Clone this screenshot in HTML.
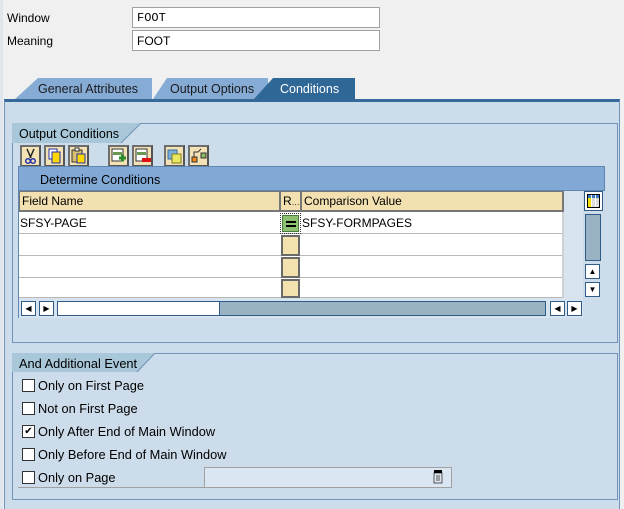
<!DOCTYPE html>
<html><head><meta charset="utf-8"><style>
*{box-sizing:border-box;margin:0;padding:0}
body{width:624px;height:509px;background:#f0f0f0;font-family:"Liberation Sans",Tahoma,sans-serif;font-size:12px;color:#000;position:relative;overflow:hidden}
.a{position:absolute}
.lbl{left:3px;width:128px;height:21px;padding:4px 0 0 4px;background:#f0f0f0}
.inp{background:#fff;border:1px solid #a0a0a0;height:21px;width:248px;left:132px;padding:3px 0 0 4px;font-family:"Liberation Mono",monospace;font-size:12px}
.btn{width:21px;height:22px;top:145px;background:#f2e2b4;border:2px solid #777;border-color:#6e6e6e #555 #555 #6e6e6e}
.hd{top:191px;height:21px;background:#f2e0b0;border:1px solid #777;border-width:1px 2px 2px 1px;padding:2px 0 0 2px}
.row{left:19px;width:543px;height:22px;background:#fff;border-bottom:1px solid #b8b8b8}
.rb{left:281px;width:19px;height:21px;background:#f3e1ae;border:2px solid #6a6a6a}
.cb{left:22px;width:13px;height:13px;background:#fff;border:1px solid #333}
.ct{left:38px;font-size:12.8px}
.sb{width:15px;height:15px;background:#fff;border:1px solid #2e5c86}
</style></head><body>
<div class="a" style="left:0;top:0;width:3px;height:509px;background:#dfe6ee"></div>
<div class="a lbl" style="top:7px">Window</div>
<div class="a inp" style="top:7px">FOOT</div>
<div class="a lbl" style="top:30px">Meaning</div>
<div class="a inp" style="top:30px;font-family:'Liberation Sans',sans-serif">FOOT</div>

<svg class="a" style="left:0;top:76px" width="624" height="26">
<polygon points="15,23 38,2 152,2 152,23" fill="#86acd6"/>
<polygon points="153,23 167,2 268,2 268,23" fill="#86acd6"/>
<polygon points="254,23 273,2 355,2 355,23" fill="#2f6797"/>
<text x="38" y="17" font-family="Liberation Sans,sans-serif" font-size="12.5" fill="#1a1a1a">General Attributes</text>
<text x="170" y="17" font-family="Liberation Sans,sans-serif" font-size="12.5" fill="#1a1a1a">Output Options</text>
<text x="280" y="17" font-family="Liberation Sans,sans-serif" font-size="12.5" fill="#fff">Conditions</text>
</svg>
<div class="a" style="left:4px;top:99px;width:616px;height:410px;background:#cddcea;border-top:3px solid #35699a;border-left:1px solid #6f93b8;border-right:1px solid #6f93b8"></div>

<div class="a" style="left:12px;top:123px;width:606px;height:220px;border:1px solid #6f93b8"></div>
<svg class="a" style="left:12px;top:123px" width="130" height="21"><polygon points="0,0 129,0 109,20 0,20" fill="#a8c8da"/><line x1="129" y1="0" x2="109" y2="20" stroke="#6f93b8"/><text x="7" y="15" font-family="Liberation Sans,sans-serif" font-size="12.5">Output Conditions</text></svg>
<div class="a btn" style="left:20px"><svg width="17" height="18"><path d="M5 2 L9 11 M12 2 L8 11" stroke="#222" stroke-width="1.5" fill="none"/><circle cx="6" cy="14" r="2.3" stroke="#2233aa" fill="none" stroke-width="1.5"/><circle cx="11" cy="14" r="2.3" stroke="#2233aa" fill="none" stroke-width="1.5"/></svg></div>
<div class="a btn" style="left:44px"><svg width="17" height="18"><rect x="3" y="2" width="8" height="10" fill="#fff" stroke="#2233aa"/><rect x="6" y="5" width="8" height="11" fill="#ffd800" stroke="#2233aa"/></svg></div>
<div class="a btn" style="left:68px"><svg width="17" height="18"><rect x="2" y="3" width="10" height="12" fill="#d8c070" stroke="#333"/><rect x="5" y="1" width="4" height="3" fill="#fff" stroke="#333"/><rect x="7" y="7" width="8" height="9" fill="#ffd800" stroke="#2233aa"/></svg></div>
<div class="a btn" style="left:108px"><svg width="17" height="18"><rect x="2" y="2" width="11" height="12" fill="#fff" stroke="#333"/><rect x="3" y="5" width="9" height="3" fill="#6a9a50"/><path d="M9 11h7M12.5 7.5v7" stroke="#2a8a2a" stroke-width="3"/></svg></div>
<div class="a btn" style="left:132px"><svg width="17" height="18"><rect x="2" y="2" width="11" height="12" fill="#fff" stroke="#333"/><rect x="3" y="5" width="9" height="3" fill="#6a9a50"/><rect x="8" y="11" width="9" height="4" fill="#dd1111"/></svg></div>
<div class="a btn" style="left:164px"><svg width="17" height="18"><rect x="2" y="3" width="9" height="9" fill="#7ab0e0" stroke="#3a6a9a"/><rect x="6" y="7" width="9" height="9" fill="#e8e860" stroke="#7a7a20"/></svg></div>
<div class="a btn" style="left:188px"><svg width="17" height="18"><rect x="2" y="10" width="5" height="5" fill="#f08a1a" stroke="#333"/><rect x="11" y="6" width="5" height="5" fill="#8ab860" stroke="#333"/><path d="M4 10V5h4l3-3" stroke="#333" fill="none"/></svg></div>

<div class="a" style="left:18px;top:166px;width:587px;height:25px;background:#82a9d6;border:1px solid #5d86b0;padding:6px 0 0 21px;font-size:12.5px">Determine Conditions</div>
<div class="a" style="left:18px;top:191px;width:565px;height:127px;background:#d7e3ee;border-left:1px solid #5d86b0"></div>
<div class="a hd" style="left:19px;width:262px">Field Name</div>
<div class="a hd" style="left:280px;width:22px">R<span style="font-size:8px">…</span></div>
<div class="a hd" style="left:301px;width:263px">Comparison Value</div>
<div class="a row" style="top:212px;padding:4px 0 0 1px">SFSY-PAGE</div>
<div class="a row" style="top:234px"></div>
<div class="a row" style="top:256px"></div>
<div class="a row" style="top:278px;height:20px"></div>
<div class="a" style="left:302px;top:216px">SFSY-FORMPAGES</div>
<div class="a" style="left:280px;top:213px;width:21px;height:21px;border:1px dotted #333;padding:1px"><div style="width:17px;height:17px;background:#8dc070;border:1px solid #4a7a3a;position:relative"><div style="position:absolute;left:3px;top:5px;width:10px;height:2px;background:#000"></div><div style="position:absolute;left:3px;top:9px;width:10px;height:2px;background:#000"></div></div></div>
<div class="a rb" style="top:235px"></div>
<div class="a rb" style="top:257px"></div>
<div class="a rb" style="top:279px;height:19px"></div>
<div class="a" style="left:562px;top:212px;width:2px;height:86px;background:#d0d0d0"></div>
<div class="a" style="left:584px;top:191px;width:19px;height:20px;border:1px solid #2e5c86;background:#fff;padding:2px"><svg width="13" height="14"><rect x="0.5" y="0.5" width="12" height="13" fill="#fff" stroke="#000"/><rect x="1" y="4" width="3" height="9" fill="#f5e000"/><rect x="5" y="1" width="3" height="3" fill="#3a7ac0"/><rect x="9" y="1" width="3" height="3" fill="#3a7ac0"/><rect x="1" y="1" width="3" height="3" fill="#3a7ac0"/><rect x="5" y="4" width="3" height="9" fill="#ddd"/><rect x="9" y="4" width="3" height="9" fill="#ddd"/></svg></div>
<div class="a" style="left:585px;top:214px;width:16px;height:47px;background:#9ab3c4;border:1px solid #2e5c86"></div>
<div class="a sb" style="left:585px;top:264px;text-align:center;font-size:8px;line-height:13px">▲</div>
<div class="a sb" style="left:585px;top:282px;text-align:center;font-size:8px;line-height:13px">▼</div>
<div class="a sb" style="left:21px;top:301px;font-size:8px;line-height:13px;text-align:center">◀</div>
<div class="a sb" style="left:39px;top:301px;font-size:8px;line-height:13px;text-align:center">▶</div>
<div class="a" style="left:57px;top:301px;width:163px;height:15px;background:#fff;border:1px solid #2e5c86"></div>
<div class="a" style="left:219px;top:301px;width:327px;height:15px;background:#9ab3c4;border:1px solid #2e5c86"></div>
<div class="a sb" style="left:550px;top:301px;font-size:8px;line-height:13px;text-align:center">◀</div>
<div class="a sb" style="left:567px;top:301px;font-size:8px;line-height:13px;text-align:center">▶</div>

<div class="a" style="left:12px;top:353px;width:606px;height:147px;border:1px solid #6f93b8"></div>
<svg class="a" style="left:12px;top:353px" width="150" height="20"><polygon points="0,0 143,0 125,19 0,19" fill="#a8c8da"/><line x1="143" y1="0" x2="125" y2="19" stroke="#6f93b8"/><text x="7" y="15" font-family="Liberation Sans,sans-serif" font-size="12.8">And Additional Event</text></svg>
<div class="a cb" style="top:379px"></div><div class="a ct" style="top:378px">Only on First Page</div>
<div class="a cb" style="top:402px"></div><div class="a ct" style="top:401px">Not on First Page</div>
<div class="a cb" style="top:425px;font-size:10px;line-height:11px;text-align:center">✔</div><div class="a ct" style="top:424px">Only After End of Main Window</div>
<div class="a cb" style="top:448px"></div><div class="a ct" style="top:447px">Only Before End of Main Window</div>
<div class="a cb" style="top:471px"></div><div class="a ct" style="top:470px">Only on Page</div>
<div class="a" style="left:18px;top:487px;width:187px;height:1px;background:#a0a0a0"></div>
<div class="a" style="left:204px;top:467px;width:248px;height:21px;background:#dae6f1;border:1px solid #a0a0a0"></div>
<svg class="a" style="left:433px;top:470px" width="12" height="14"><rect x="1" y="3" width="8" height="10" fill="#dde6f0" stroke="#555"/><path d="M3 6h4M3 8h4M3 10h4" stroke="#555"/><rect x="1" y="0" width="8" height="3" fill="#000"/></svg>
</body></html>
